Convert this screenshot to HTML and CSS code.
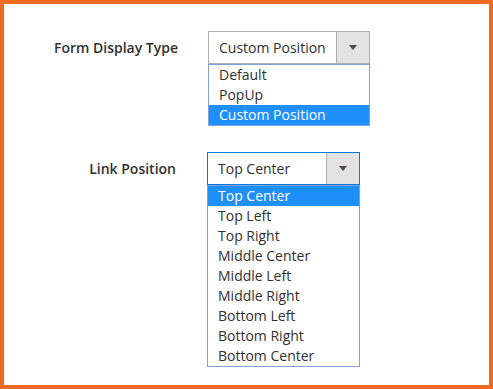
FILE: index.html
```html
<!DOCTYPE html>
<html>
<head>
    <title>Form Settings</title>
    <link rel="stylesheet" href="styles.css">
</head>
<body>
    <div class="frame">
        <div class="field">
            <label class="field-label">Form Display Type</label>
            <div class="control">
                <div class="select">
                    <span class="select-value">Custom Position</span>
                    <span class="select-arrow"><span class="caret"></span></span>
                </div>
                <ul class="options">
                    <li>Default</li>
                    <li>PopUp</li>
                    <li class="selected">Custom Position</li>
                </ul>
            </div>
        </div>

        <div class="field field-link">
            <label class="field-label">Link Position</label>
            <div class="control">
                <div class="select focused">
                    <span class="select-value">Top Center</span>
                    <span class="select-arrow"><span class="caret"></span></span>
                </div>
                <ul class="options">
                    <li class="selected">Top Center</li>
                    <li>Top Left</li>
                    <li>Top Right</li>
                    <li>Middle Center</li>
                    <li>Middle Left</li>
                    <li>Middle Right</li>
                    <li>Bottom Left</li>
                    <li>Bottom Right</li>
                    <li>Bottom Center</li>
                </ul>
            </div>
        </div>
    </div>
</body>
</html>
```

FILE: styles.css
```css
:root {
    --frame-color: #ec6a22;
    --text-color: #303030;
    --border-color: #adadad;
    --focus-color: #007bdb;
    --list-border: #7f9fd8;
    --highlight: #1f8ffb;
    --button-bg: #e3e3e3;
}

* {
    box-sizing: border-box;
    margin: 0;
    padding: 0;
}

body {
    font-family: 'Open Sans', 'Liberation Sans', sans-serif;
    font-size: 14px;
    color: var(--text-color);
    background: #ffffff;
}

.frame {
    height: 389px;
    border: 4px solid var(--frame-color);
    padding-top: 27px;
}

.field {
    display: flex;
    align-items: flex-start;
}

.field + .field {
    margin-top: 26px;
}

.field-label {
    width: 174px;
    margin-right: 30px;
    text-align: right;
    font-weight: 600;
    line-height: 33px;
}

.control {
    width: 162px;
}

.field-link .field-label {
    width: 172px;
    margin-right: 31px;
}

.field-link .control {
    width: 153px;
}

.select {
    display: flex;
    height: 33px;
    border: 1px solid var(--border-color);
    background: #ffffff;
}

.select.focused {
    border-color: var(--focus-color);
}

.select-value {
    flex: 1;
    padding-left: 10px;
    line-height: 31px;
}

.select-arrow {
    width: 33px;
    border-left: 1px solid var(--border-color);
    background: var(--button-bg);
    display: flex;
    align-items: center;
    justify-content: center;
}

.caret {
    width: 0;
    height: 0;
    border-left: 4px solid transparent;
    border-right: 4px solid transparent;
    border-top: 5px solid #514943;
}

.options {
    list-style: none;
    border: 1px solid var(--list-border);
}

.options li {
    height: 20px;
    line-height: 20px;
    padding-left: 10px;
}

.options li.selected {
    background: var(--highlight);
    color: #ffffff;
}
```
